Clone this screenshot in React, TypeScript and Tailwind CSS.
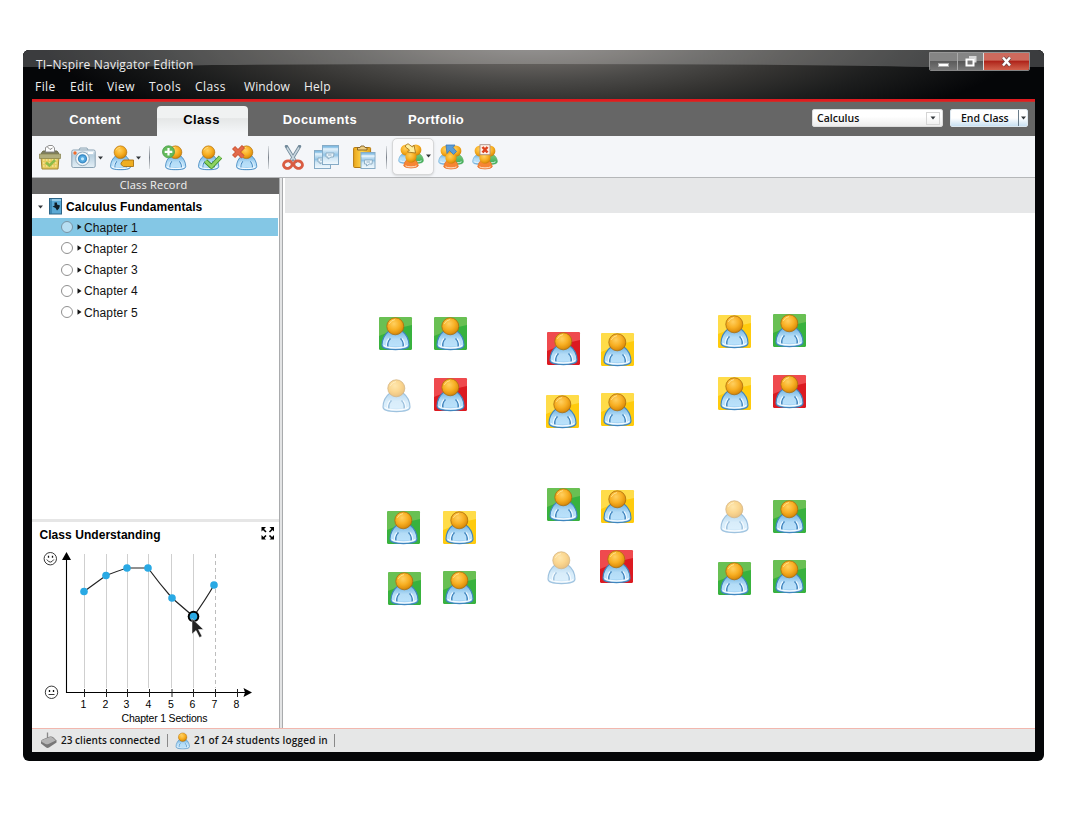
import React from "react";

const HUM = "font-['Open_Sans','Noto_Sans',sans-serif]";
const ARI = "font-['Liberation_Sans',Arial,sans-serif]";

function Defs() {
  return (
    <svg width="0" height="0" className="absolute">
      <defs>
        <radialGradient id="head" cx="0.42" cy="0.35" r="0.7">
          <stop offset="0" stopColor="#ffd060" />
          <stop offset="0.5" stopColor="#f8b024" />
          <stop offset="0.8" stopColor="#e2940f" />
          <stop offset="1" stopColor="#b8740a" />
        </radialGradient>
        <linearGradient id="body" x1="0" y1="0" x2="0" y2="1">
          <stop offset="0" stopColor="#6eb2e2" />
          <stop offset="0.45" stopColor="#b4dcf6" />
          <stop offset="0.8" stopColor="#b9e1fb" />
          <stop offset="1" stopColor="#5da3d8" />
        </linearGradient>
        <linearGradient id="green" x1="0" y1="0" x2="0" y2="1">
          <stop offset="0" stopColor="#7cc77c" />
          <stop offset="1" stopColor="#35ad55" />
        </linearGradient>
        <linearGradient id="orange" x1="0" y1="0" x2="0" y2="1">
          <stop offset="0" stopColor="#f88a2c" />
          <stop offset="1" stopColor="#f5823c" />
        </linearGradient>
        <linearGradient id="steel" x1="0" y1="0" x2="0" y2="1">
          <stop offset="0" stopColor="#f2f8fc" />
          <stop offset="0.3" stopColor="#b7cfdf" />
          <stop offset="1" stopColor="#e4eff6" />
        </linearGradient>
        <linearGradient id="page" x1="0" y1="0" x2="0" y2="1">
          <stop offset="0" stopColor="#6db1de" />
          <stop offset="0.25" stopColor="#d5e9f6" />
          <stop offset="0.5" stopColor="#8fc3e6" />
          <stop offset="0.65" stopColor="#cfe6f5" />
          <stop offset="1" stopColor="#f2f9fd" />
        </linearGradient>
        <linearGradient id="gold" x1="0" y1="0" x2="1" y2="0">
          <stop offset="0" stopColor="#eaa61c" />
          <stop offset="0.5" stopColor="#ffd54d" />
          <stop offset="1" stopColor="#dd9c18" />
        </linearGradient>
      </defs>
    </svg>
  );
}

function Figure() {
  return (
    <g>
      <path d="M10 14 C6 17 3.200 22.500 3 28 C3 31.500 8 32.600 16.500 32.600 C25 32.600 30 31.500 30 28 C29.800 22.500 27 17 23 14 Z" fill="url(#body)" stroke="#3f86bf" strokeWidth="1.100" />
      <path d="M8.800 30 Q8 24.500 11.500 21.500 M24.200 30 Q25 24.500 21.500 21.500" fill="none" stroke="#3a80bb" strokeWidth="1.500" />
      <path d="M5 28.300 Q6 30.800 16.500 31 Q27 30.800 28 28.300" fill="none" stroke="#f4fbff" strokeWidth="1.500" />
      <path d="M7.500 29 Q7 24.500 10 21.500 M25.500 29 Q26 24.500 23 21.500" fill="none" stroke="#e9f6ff" strokeWidth="1.200" />
      <circle cx="16.300" cy="9.300" r="8.500" fill="url(#head)" stroke="#ac6d0c" strokeWidth="0.800" />
      <path d="M10.300 6.800 Q12 3.200 16 2.600" fill="none" stroke="#ffe08a" strokeWidth="1" />
    </g>
  );
}

function Person({ className }: { className?: string }) {
  return (
    <svg viewBox="1 0 32 34" className={className}>
      <Figure />
    </svg>
  );
}

type Tone = "g" | "y" | "r" | "n";
const tones = {
  g: ["#38b23e", "#69c053"],
  y: ["#ffcb0d", "#ffdc49"],
  r: ["#dc1a21", "#ef4a4e"],
};

function Seat({ x, y, tone }: { x: number; y: number; tone: Tone }) {
  return (
    <svg width="34" height="34" viewBox="0 0 34 34" className="absolute" style={{ left: x - 283, top: y - 178 }}>
      {tone !== "n" && (
        <>
          <rect x="0" y="0" width="33" height="33" rx="1.5" fill={tones[tone][0]} />
          <path d="M0 1.5 Q0 0 1.5 0 H31.5 Q33 0 33 1.5 V8 Q22 10 12 14 Q5 17 0 19 Z" fill={tones[tone][1]} />
          <Figure />
        </>
      )}
      {tone === "n" && (
        <g opacity="0.5">
          <Figure />
        </g>
      )}
    </svg>
  );
}

const seats: [number, number, Tone][] = [
  [379, 317, "g"], [434, 317, "g"], [380, 379, "n"], [434, 378, "r"],
  [547, 332, "r"], [601, 333, "y"], [546, 395, "y"], [601, 393, "y"],
  [718, 315, "y"], [773, 314, "g"], [718, 377, "y"], [773, 375, "r"],
  [387, 511, "g"], [443, 511, "y"], [388, 572, "g"], [443, 571, "g"],
  [547, 488, "g"], [601, 490, "y"], [545, 551, "n"], [600, 550, "r"],
  [718, 500, "n"], [773, 500, "g"], [718, 562, "g"], [773, 560, "g"],
];

function Group({ children }: { children?: React.ReactNode }) {
  return (
    <svg width="26" height="26" viewBox="0 0 26 26">
      <path d="M5 10.500 Q0.700 13 0.700 18 Q1 20 5 20.200 H12 V10.500 Z" fill="url(#body)" stroke="#6fafd9" strokeWidth="0.700" />
      <path d="M21 10.500 Q25.300 13 25.300 18 Q25 20 21 20.200 H14 V10.500 Z" fill="url(#green)" stroke="#55ac60" strokeWidth="0.700" />
      <path d="M2.500 17.800 Q4.500 19 7 18.800 M23.500 17.800 Q21.500 19 19 18.800" fill="none" stroke="#f2fbff" strokeWidth="0.900" />
      <circle cx="8.200" cy="7" r="5.600" fill="url(#head)" />
      <circle cx="17.800" cy="7" r="5.600" fill="url(#head)" />
      <path d="M9 16.500 Q6 19 5.700 22.800 Q6.500 24.800 13 25 Q19.500 24.800 20.300 22.800 Q20 19 17 16.500 Z" fill="url(#orange)" stroke="#e66b22" strokeWidth="0.700" />
      <path d="M7.500 22.800 Q9 23.900 13 23.900 Q17 23.900 18.500 22.800" fill="none" stroke="#ffe6cf" strokeWidth="1" />
      <circle cx="13" cy="14" r="5.600" fill="url(#head)" />
      {children}
    </svg>
  );
}

function Basket() {
  return (
    <svg width="24" height="27" viewBox="0 0 24 27">
      <path d="M3 13 H21 L20 25 H4 Z" fill="#e6cb5c" stroke="#a08534" strokeWidth="1" />
      <path d="M5 16 H19 M5 19 H19 M5 22 H19" stroke="#fbf1bd" strokeWidth="1" strokeDasharray="1.500 1.500" />
      <path d="M3.500 9 L5 7 H19 L20.500 9 V13 H2.500 Z" fill="#7d7d5e" stroke="#6e6f4c" strokeWidth="1" />
      <path d="M1.500 10 H22.500 V14.500 H1.500 Z" fill="#b0ad7c" stroke="#85814b" strokeWidth="0.700" />
      <path d="M7.500 8 V3.500 L11 1.500 H14.500 L16.500 4 V8 Z" fill="#fff" stroke="#858585" strokeWidth="0.900" />
      <path d="M9.500 3 L12 5.500 L14.500 4" fill="none" stroke="#777" strokeWidth="0.900" />
      <path d="M8 18.500 L11.500 21.500 L17 16" fill="none" stroke="#8dbb4a" strokeWidth="2.600" />
    </svg>
  );
}

function Camera() {
  return (
    <svg width="25" height="22" viewBox="0 0 25 22">
      <path d="M8 3 L9 1 H16 L17 3" fill="#e4edf3" stroke="#8ea6b5" />
      <rect x="0.800" y="3" width="23.400" height="17.500" rx="1.500" fill="url(#steel)" stroke="#8aa2b3" />
      <circle cx="11.500" cy="11.800" r="6.800" fill="#f2f7fa" stroke="#91a9b9" />
      <circle cx="11.500" cy="11.800" r="4" fill="#54a9e0" stroke="#3787c2" strokeWidth="1.200" />
      <circle cx="11.500" cy="11.800" r="1.600" fill="#bfeaff" />
      <circle cx="4" cy="6" r="1.700" fill="#f06b2c" />
      <path d="M17 6 H22" stroke="#fff" strokeWidth="2" />
    </svg>
  );
}

function Scissors() {
  return (
    <svg width="22" height="26" viewBox="0 0 22 26">
      <path d="M4.500 1.500 L13.500 16.500 M17.500 1.500 L8.500 16.500" stroke="#71899a" strokeWidth="3.400" strokeLinecap="round" />
      <path d="M5 2.500 L13 15.500 M17 2.500 L9 15.500" stroke="#c8d6df" strokeWidth="1.500" />
      <ellipse cx="5.800" cy="19.600" rx="4.300" ry="3.700" transform="rotate(-20 5.800 19.600)" fill="none" stroke="#d95c42" strokeWidth="2.800" />
      <ellipse cx="16.200" cy="19.600" rx="4.300" ry="3.700" transform="rotate(20 16.200 19.600)" fill="none" stroke="#d95c42" strokeWidth="2.800" />
    </svg>
  );
}

function Sheet({ x, y, w, h }: { x: number; y: number; w: number; h: number }) {
  return (
    <g transform={`translate(${x} ${y})`}>
      <rect x="0.500" y="0.500" width={w} height={h} fill="url(#page)" stroke="#86abc6" />
      <path d={`M1 4 H${w}`} stroke="#e9f6fd" strokeWidth="1.200" />
      <path d="M4 8 H12 L11.500 12 H9 L6 14 V12 H4 Z" fill="#e9f4fb" stroke="#88a8be" strokeWidth="0.900" />
      <path d="M6 10 H9.500" stroke="#88a8be" strokeWidth="0.900" />
    </g>
  );
}

function Copy() {
  return (
    <svg width="26" height="26" viewBox="0 0 26 26">
      <Sheet x={0} y={5} w={16} h={18} />
      <Sheet x={8} y={0} w={16} h={19} />
    </svg>
  );
}

function Paste() {
  return (
    <svg width="23" height="25" viewBox="0 0 23 25">
      <rect x="0.600" y="2.500" width="17" height="20" rx="1" fill="url(#gold)" stroke="#b67b12" />
      <path d="M4.500 5 V2.500 H7 L8 1 H11 L12 2.500 H14 V5 Z" fill="#eecf86" stroke="#805d22" strokeWidth="0.900" />
      <Sheet x={7.500} y={7} w={14} h={16} />
    </svg>
  );
}

function Caret({ className }: { className?: string }) {
  return (
    <svg width="5" height="4" viewBox="0 0 5 4" className={className}>
      <path d="M0 0.500 H5 L2.500 3.500 Z" fill="#33373b" />
    </svg>
  );
}

function Sep({ className }: { className?: string }) {
  return <div className={`h-[23px] w-px bg-linear-to-b from-[#dcdfe2] via-[#7d848d] to-[#dcdfe2] ${className ?? ""}`} />;
}

function WindowButtons() {
  return (
    <div className="mt-[2px] mr-[14px] flex h-[19px] w-[101px] overflow-hidden rounded-b-[2px] border border-[#b9b9b9]/70">
      <div className="flex w-[28px] items-end justify-center border-r border-[#a9a9a9] bg-linear-to-b from-[#858585] from-45% via-[#5c5c5c] via-50% to-[#777] pb-[3px]">
        <div className="h-[4px] w-[11px] border border-[#aaa] bg-white" />
      </div>
      <div className="flex w-[26px] items-center justify-center border-r border-[#ddd] bg-linear-to-b from-[#858585] from-45% via-[#575757] via-50% to-[#777]">
        <svg width="14" height="13" viewBox="0 0 14 13">
          <path d="M5 1 H12.500 V7.500 H10 V3.500 H5 Z" fill="#d6d6d6" />
          <rect x="2.500" y="4.500" width="7" height="6" fill="#777" stroke="#fff" strokeWidth="2" />
        </svg>
      </div>
      <div className="flex flex-1 items-center justify-center bg-linear-to-b from-[#cd6a5d] from-40% via-[#b0241b] via-50% to-[#d0604c]">
        <svg width="13" height="11" viewBox="0 0 13 11">
          <path d="M3 1.500 L10 9.500 M10 1.500 L3 9.500" stroke="#6b4848" strokeWidth="4" />
          <path d="M3 1.500 L10 9.500 M10 1.500 L3 9.500" stroke="#fff" strokeWidth="2.500" />
        </svg>
      </div>
    </div>
  );
}

function TitleArea() {
  return (
    <div className={`relative h-[49px] shrink-0 overflow-hidden rounded-t-[6px] bg-[#050608] text-[12px] text-[#eee] ${HUM}`}>
      <svg width="1021" height="49" className="absolute inset-0">
        <defs>
          <radialGradient id="glow" gradientUnits="userSpaceOnUse" cx="0" cy="0" r="1" gradientTransform="translate(510 -10) scale(490 108)">
            <stop offset="0" stopColor="#7c7a79" />
            <stop offset="0.220" stopColor="#625f5c" />
            <stop offset="0.380" stopColor="#4a4947" />
            <stop offset="0.550" stopColor="#353432" />
            <stop offset="0.750" stopColor="#1d1e1e" />
            <stop offset="1" stopColor="#050608" />
          </radialGradient>
        </defs>
        <rect width="1021" height="49" fill="url(#glow)" />
        <path d="M0 0 H1021 V17 H900 Q780 14 510 14 Q300 14 190 15 L100 17 H0 Z" fill="#fff" opacity="0.220" />
      </svg>
      <div className="relative flex h-[27px] items-start justify-between">
        <div className="pt-[5px] pl-[13px] leading-[20px] tracking-[0.2px]">TI–Nspire Navigator Edition</div>
        <WindowButtons />
      </div>
      <div className="relative flex pl-[12px] leading-[20px] tracking-[0.45px]">
        <span className="w-[35px]">File</span>
        <span className="w-[37px]">Edit</span>
        <span className="w-[42px]">View</span>
        <span className="w-[46px]">Tools</span>
        <span className="w-[49px]">Class</span>
        <span className="w-[60px] tracking-[0.1px]">Window</span>
        <span className="tracking-[0.200px]">Help</span>
      </div>
    </div>
  );
}

function TabBar() {
  return (
    <div className={`flex h-[34px] shrink-0 bg-[#666] text-[13px] font-bold text-white ${ARI}`}>
      <div className="w-[125px] pt-[9px] pl-px text-center leading-[18px] tracking-[0.35px]">Content</div>
      <div className="mt-[4px] w-[91px] rounded-t-[4px] bg-linear-to-b from-[#f0f2f2] from-40% via-[#e5e7e7] via-42% to-[#f4f6f8] to-90% pr-[2px] pt-[5px] text-center leading-[18px] tracking-[0.35px] text-black">Class</div>
      <div className="w-[143px] pt-[9px] pl-px text-center leading-[18px] tracking-[0.4px]">Documents</div>
      <div className="w-[89px] pt-[9px] pl-px text-center leading-[18px] tracking-[0.3px]">Portfolio</div>
      <div className={`ml-auto flex pt-[7px] text-[10.500px] font-semibold text-[#111] ${HUM}`}>
        <div className="flex h-[18px] w-[131px] items-center justify-between rounded-[2px] border border-[#ddd] bg-linear-to-b from-white from-40% to-[#ececec] pr-[2px] pl-[4px]">
          <span className="pt-px">Calculus</span>
          <div className="flex h-[13px] w-[14px] items-center justify-center border border-[#d5d5d5]">
            <Caret className="h-[4px] w-[6px]" />
          </div>
        </div>
        <div className="mr-[7px] ml-[7px] flex h-[18px] w-[78px] rounded-[2px] border border-[#dde8f0] bg-linear-to-b from-white from-50% to-[#c8e0f2]">
          <span className="w-[67px] pl-[10px] leading-[17px] whitespace-nowrap">End Class</span>
          <div className="flex flex-1 items-center justify-center border-l border-[#6b7d8b]">
            <Caret />
          </div>
        </div>
      </div>
    </div>
  );
}

function Toolbar() {
  return (
    <div className="flex h-[42px] shrink-0 items-center border-b border-[#b5b7b9] bg-[#f4f6f9] pt-[2px]">
      <div className="ml-[6px]"><Basket /></div>
      <div className="ml-[9px]"><Camera /></div>
      <Caret className="ml-[2px]" />
      <svg width="26" height="26" viewBox="0 0 26 26" className="ml-[6px]">
        <svg width="24" height="26" viewBox="1 0 32 34"><Figure /></svg>
        <path d="M12 18 L14.500 15 H24.500 V21.500 H14.500 L12 19.500 Z" fill="#efae22" stroke="#a87314" strokeWidth="0.900" />
      </svg>
      <Caret className="ml-px" />
      <Sep className="ml-[8px]" />
      <svg width="26" height="26" viewBox="0 0 26 26" className="ml-[12px]">
        <svg x="2" width="24" height="26" viewBox="1 0 32 34"><Figure /></svg>
        <circle cx="6.500" cy="6.800" r="6" fill="#64bb5c" stroke="#459a45" strokeWidth="0.800" />
        <path d="M6.500 3 V10.600 M2.700 6.800 H10.300" stroke="#fff" strokeWidth="2.200" />
      </svg>
      <svg width="27" height="26" viewBox="0 0 27 26" className="ml-[9px]">
        <svg width="24" height="26" viewBox="1 0 32 34"><Figure /></svg>
        <path d="M8.500 16 L14.500 21.500 L23.500 12" fill="none" stroke="#3d8c29" strokeWidth="4.600" strokeLinejoin="round" />
        <path d="M8.500 16 L14.500 21.500 L23.500 12" fill="none" stroke="#8ed362" strokeWidth="3" />
      </svg>
      <svg width="27" height="26" viewBox="0 0 27 26" className="ml-[8px]">
        <svg x="3" width="24" height="26" viewBox="1 0 32 34"><Figure /></svg>
        <path d="M1.500 2.500 L11 12 M11.500 1.500 L1.500 11.500" stroke="#c8512f" strokeWidth="4.400" />
        <path d="M2 3 L11 12 M11 2 L2 11" stroke="#e2694a" strokeWidth="3" />
      </svg>
      <Sep className="ml-[9px]" />
      <div className="ml-[13px]"><Scissors /></div>
      <div className="ml-[10px]"><Copy /></div>
      <div className="ml-[13px]"><Paste /></div>
      <Sep className="ml-[10px]" />
      <div className="mb-[2px] ml-[5px] flex h-[37px] w-[42px] shrink-0 items-center rounded-[5px] border border-[#d6d7d8] bg-[#fafafb] pb-[2px] pl-[5px] shadow-sm">
        <Group>
          <path d="M7.500 2.500 L10 0.700 L14.500 4 L16 2 L17.500 10 L9.500 9 L11.500 7 L7.500 4 Z" fill="#fff0a0" stroke="#a57724" strokeWidth="0.900" />
        </Group>
        <Caret className="ml-[2px]" />
      </div>
      <div className="ml-[4px] pb-[2px]">
        <Group>
          <path d="M8 1 L17 1 L15 3.500 L18.500 7.500 L15.500 10.500 L11.500 6.500 L9 9.500 Z" fill="#5b9dd8" stroke="#3a79ba" strokeWidth="0.800" />
        </Group>
      </div>
      <div className="ml-[8px] pb-[2px]">
        <Group>
          <rect x="8" y="0.700" width="10" height="10" fill="#fff2e8" stroke="#a98f84" strokeWidth="0.900" />
          <path d="M10.500 3 L15.500 8.500 M15.500 3 L10.500 8.500" stroke="#dd431e" strokeWidth="2.600" />
        </Group>
      </div>
    </div>
  );
}

function Tree() {
  return (
    <div className={`pt-px text-[13px] text-[#111] ${ARI}`}>
      <div className="flex h-[22px] items-center pl-[6px] pt-[1px] font-bold">
        <Caret className="shrink-0" />
        <svg width="13" height="17" viewBox="0 0 13 17" className="ml-[6px] shrink-0">
          <rect x="0.500" y="0.500" width="12" height="15.500" fill="#5ba9d5" stroke="#2c6486" />
          <path d="M1 2 H12" stroke="#cbe9f8" strokeWidth="1" />
          <path d="M2 1 V16" stroke="#2d759f" strokeWidth="1.200" />
          <path d="M5.500 4.500 H8 V6.500 L11 7.500 L10 10.500 L8 12.500 L6.500 10 L3.500 8.500 L5.500 7.800 Z" fill="#101d26" />
        </svg>
        <span className="ml-[4px] text-[12px] tracking-[0.080px] text-black">Calculus Fundamentals</span>
      </div>
      {[1, 2, 3, 4, 5].map((n) => (
        <div
          key={n}
          className={
            n === 1
              ? "mt-px mr-px flex h-[18px] items-center bg-[#84c7e5] pl-[29px]"
              : "mr-px mt-[3.300px] flex h-[18px] items-center pl-[29px]"
          }
        >
          <div className={n === 1 ? "h-[12px] w-[12px] rounded-full border border-[#7995a6] bg-[#b7def2]" : "h-[12px] w-[12px] rounded-full border border-[#909090] bg-white"} />
          <svg width="5" height="6" viewBox="0 0 5 6" className="ml-[4px]">
            <path d="M0.500 0.300 L4.500 3 L0.500 5.700 Z" fill="#111" />
          </svg>
          <span className="ml-[2px] pt-px text-[12px] tracking-[0.120px]">Chapter {n}</span>
        </div>
      ))}
    </div>
  );
}

const points = [
  [52, 69.5], [74, 53.5], [95, 46], [116, 46], [140, 76], [161.500, 94.5], [182, 63],
];
const ticks = [52.5, 74.500, 95.500, 117.500, 140, 161.500, 183.500, 205.500];

function Chart() {
  return (
    <svg width="246" height="206" viewBox="0 0 246 206" className={`block text-[10.500px] ${ARI}`}>
      <text x="7.500" y="17" fontSize="12" fontWeight="700" textLength="121" className="fill-black">Class Understanding</text>
      <g stroke="#000" strokeWidth="1.600" fill="#000">
        <path d="M231 7 L234 10 M240.500 7 L237.500 10 M231 16.500 L234 13.500 M240.500 16.500 L237.500 13.500" />
        <path stroke="none" d="M229.500 5 H234 L229.500 9.500 Z M242 5 H237.500 L242 9.500 Z M229.500 17.500 H234 L229.500 13 Z M242 17.500 H237.500 L242 13 Z" />
      </g>
      <g fill="none" stroke="#222" strokeWidth="0.900">
        <circle cx="18.300" cy="36.700" r="6.200" />
        <path d="M14.800 37.500 Q18.300 42.700 21.800 37.500" />
        <circle cx="19.500" cy="170.300" r="6.200" />
        <path d="M16.500 172.500 H22.500" />
      </g>
      <path d="M16.500 33.700 V35.700 M20.500 33.700 V35.700 M17.500 168 V170 M21.500 168 V170" stroke="#111" strokeWidth="1.300" />
      {[52.500, 74.500, 95.500, 116.500, 139.500, 161.500].map((x) => (
        <path key={x} d={`M${x} 32 V166`} stroke="#cfcfcf" strokeWidth="1" />
      ))}
      <path d="M183.500 32 V166" stroke="#bdbdbd" strokeDasharray="4 3" />
      <path d="M34.500 36 V170.500 H214" fill="none" stroke="#000" strokeWidth="1.100" />
      <path d="M34.500 30 L39 38 H30 Z" />
      <path d="M211.500 166 L220 170.500 L211.500 175 L213 170.500 Z" />
      {ticks.map((x, i) => (
        <g key={x}>
          <path d={`M${x} 167 V175`} stroke="#222" strokeWidth="1" />
          <text x={x - 1.200} y="186" textAnchor="middle" fontSize="10.500">{i + 1}</text>
        </g>
      ))}
      <text x="89.500" y="199.500" fontSize="10.500" textLength="86">Chapter 1 Sections</text>
      <path d="M52 69.500 L74 53.500 Q86 49 95 46 H116 Q127 61 140 76 L161.500 94.500 Q174 77 182 63" fill="none" stroke="#222" strokeWidth="1.200" />
      <circle cx="161.500" cy="94.500" r="5.800" fill="#000" />
      {points.map(([x, y]) => (
        <circle key={x} cx={x} cy={y} r="3.800" fill="#29a9e4" />
      ))}
      <path d="M160 96.500 V112 L164 108.500 L167.500 115.500 L170 114.200 L166.500 107.500 H171.500 Z" fill="#222" stroke="#fff" strokeWidth="0.500" />
    </svg>
  );
}

function StatusBar() {
  return (
    <div className={`flex h-[24px] shrink-0 items-center border-t border-[#f2b7ae] bg-[#e6e7e7] text-[10px] font-semibold text-[#151515] ${HUM}`}>
      <svg width="17" height="17" viewBox="0 0 17 17" className="ml-[8px]">
        <path d="M7.500 0.500 V7" stroke="#888" strokeWidth="1.300" />
        <path d="M1 10 Q1 8 3 7.200 L10 4.500 Q12 4 13.500 5.500 L16.500 8.500 V10.500 L9 15.500 Q7.500 16.500 5.500 15 L1 11.500 Z" fill="#777" />
        <path d="M1.500 9.700 Q1.500 8 3.500 7.500 L10 5 Q11.500 4.500 13 6 L15.700 8.500 L8.500 12 Q7 12.700 5.500 12 Z" fill="#b4b4b4" />
      </svg>
      <span className="ml-[4px] w-[99px] whitespace-nowrap tracking-[0.030px]">23 clients connected</span>
      <div className="ml-[7px] h-[13px] w-px bg-[#898989]" />
      <Person className="ml-[7px] h-[18px] w-[16px]" />
      <span className="ml-[3px] w-[134px] whitespace-nowrap tracking-[0.180px]">21 of 24 students logged in</span>
      <div className="ml-[6px] h-[13px] w-px bg-[#898989]" />
    </div>
  );
}

export default function App() {
  return (
    <div className="h-[813px] w-[1068px] overflow-hidden bg-white pt-[50px] pl-[23px]">
      <Defs />
      <div className="flex h-[711px] w-[1021px] flex-col rounded-[6px] bg-[#050608]">
        <TitleArea />
        <div className="ml-[9px] flex h-[654px] w-[1003px] flex-col">
          <div className="h-[3px] shrink-0 bg-linear-to-b from-[#e01b20] from-60% to-[#b8382f]" />
          <TabBar />
          <Toolbar />
          <div className="flex h-[550px] shrink-0">
            <div className="flex w-[247px] flex-col bg-white">
              <div className={`h-[16px] shrink-0 bg-[#666] pr-[4px] text-center text-[11px] leading-[13px] tracking-[0.2px] text-[#f2f2f2] ${HUM}`}>Class Record</div>
              <div className="h-[325px] shrink-0"><Tree /></div>
              <div className="h-[3px] shrink-0 bg-[#e6e6e6]" />
              <Chart />
            </div>
            <div className="w-[4px] border-x border-[#a9abad] bg-[#e3e4e5]" />
            <div className="relative flex-1 bg-white">
              <div className="ml-[2px] h-[35px] bg-[#e6e7e8]" />
              {seats.map(([x, y, t]) => (
                <Seat key={`${x}-${y}`} x={x} y={y} tone={t} />
              ))}
            </div>
          </div>
          <StatusBar />
        </div>
      </div>
    </div>
  );
}
